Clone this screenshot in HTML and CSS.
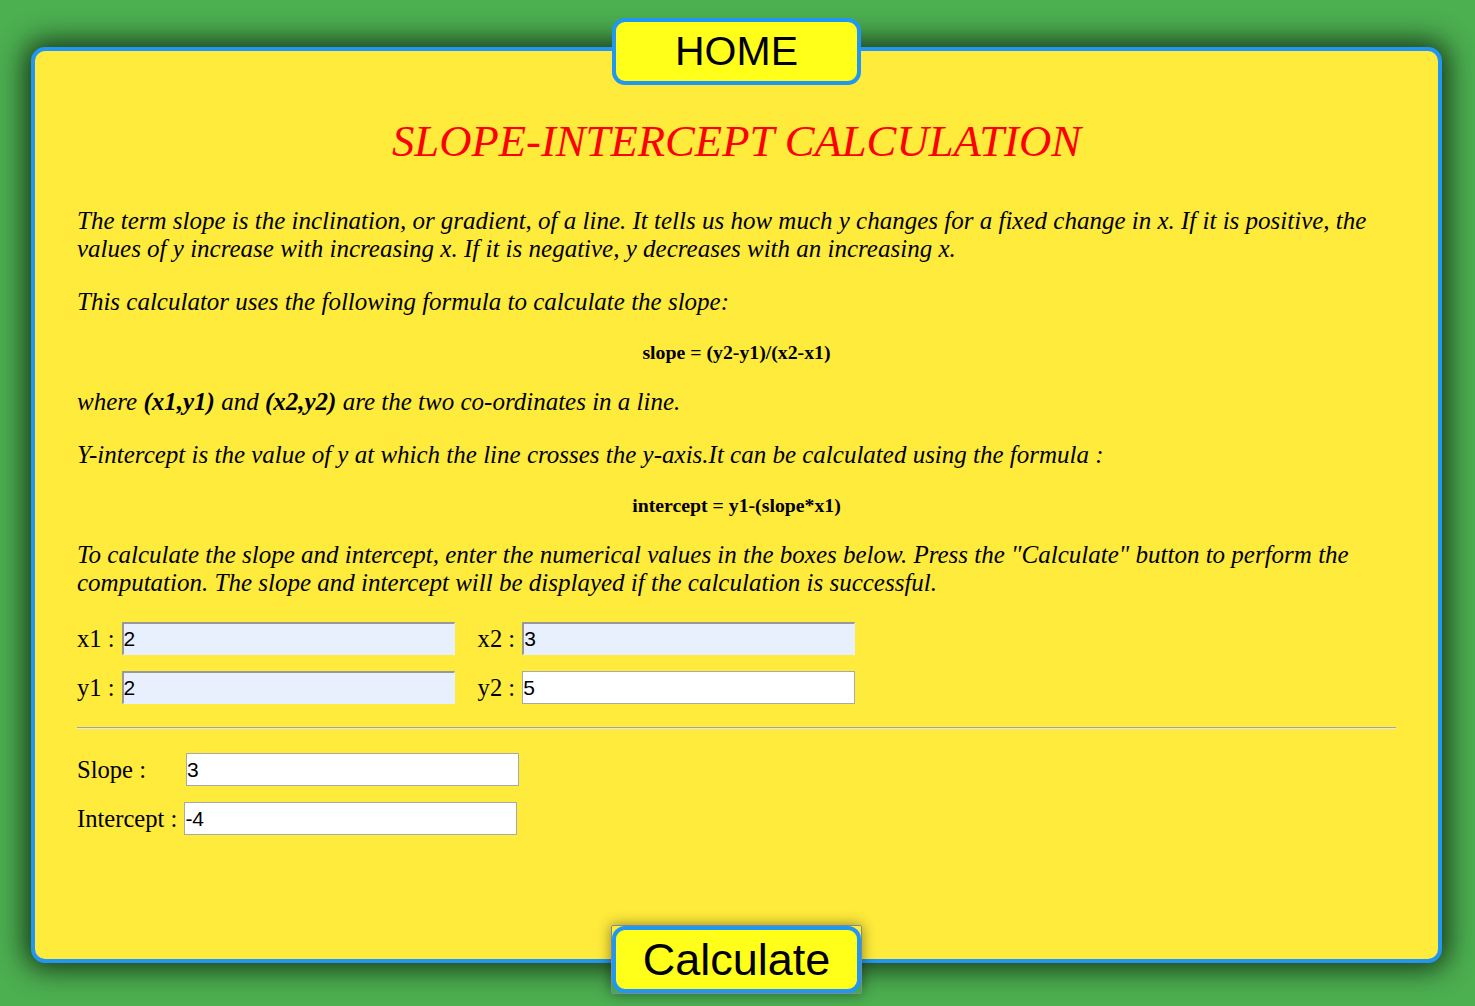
FILE: index.html
```html
<!DOCTYPE html>
<html>
<head>
<meta charset="utf-8">
<title>Slope-Intercept Calculation</title>
<link rel="stylesheet" href="styles.css">
</head>
<body>
<div class="card">
  <button class="btn btn-home">HOME</button>
  <h1 class="title">SLOPE-INTERCEPT CALCULATION</h1>
  <p class="text">The term slope is the inclination, or gradient, of a line. It tells us how much y changes for a fixed change in x. If it is positive, the values of y increase with increasing x. If it is negative, y decreases with an increasing x.</p>
  <p class="text">This calculator uses the following formula to calculate the slope:</p>
  <p class="formula">slope = (y2-y1)/(x2-x1)</p>
  <p class="text">where <b>(x1,y1)</b> and <b>(x2,y2)</b> are the two co-ordinates in a line.</p>
  <p class="text">Y-intercept is the value of y at which the line crosses the y-axis.It can be calculated using the formula :</p>
  <p class="formula">intercept = y1-(slope*x1)</p>
  <p class="text">To calculate the slope and intercept, enter the numerical values in the boxes below. Press the "Calculate" button to perform the computation. The slope and intercept will be displayed if the calculation is successful.</p>
  <div class="grid">
    <label class="lbl">x1 :</label><input class="field auto" value="2">
    <label class="lbl lbl2">x2 :</label><input class="field auto" value="3">
    <label class="lbl">y1 :</label><input class="field auto" value="2">
    <label class="lbl lbl2">y2 :</label><input class="field" value="5">
  </div>
  <hr class="rule">
  <div class="result">
    <label class="lbl slope-lbl">Slope :</label><input class="field" value="3">
  </div>
  <div class="result">
    <label class="lbl">Intercept :</label><input class="field" value="-4">
  </div>
  <div class="calc-wrap"><button class="btn btn-calc">Calculate</button></div>
</div>
</body>
</html>
```
FILE: styles.css
```css
html, body {
  margin: 0;
  padding: 0;
}
body {
  background: #4caf50;
  height: 1006px;
  overflow: hidden;
  padding-top: 47px;
  box-sizing: border-box;
}
.card {
  position: relative;
  margin-left: 31px;
  width: 1411px;
  height: 916px;
  box-sizing: border-box;
  background: #ffeb3b;
  border: 4px solid #2196f3;
  border-radius: 14px;
  box-shadow: 0 0 28px 6px rgba(0, 0, 0, 0.7);
  padding: 65px 42px 0 42px;
}
.btn {
  position: absolute;
  left: 577px;
  width: 249px;
  height: 67px;
  box-sizing: border-box;
  background: #ffff1a;
  border: 4px solid #2196f3;
  border-radius: 13px;
  font-family: "Liberation Sans", Arial, sans-serif;
  color: #000;
  padding: 0;
  cursor: pointer;
}
.btn-home {
  top: -33px;
  font-size: 41px;
}
.btn-calc {
  font-size: 45px;
  position: static;
  width: 100%;
  height: 100%;
}
.calc-wrap {
  position: absolute;
  left: 576px;
  top: 874px;
  width: 251px;
  height: 69px;
  box-sizing: border-box;
  border: 1px solid #7a8a9a;
  padding: 0;
  box-shadow: 0 0 14px rgba(0, 0, 0, 0.45);
  border-radius: 2px;
}
.title {
  margin: 0 0 41px 0;
  text-align: center;
  color: #ff0000;
  font-family: "Liberation Serif", "Times New Roman", serif;
  font-style: italic;
  font-weight: normal;
  font-size: 44.7px;
  line-height: 50px;
}
.text {
  margin: 0 0 25px 0;
  font-family: "Liberation Serif", "Times New Roman", serif;
  font-style: italic;
  font-size: 25px;
  line-height: 28px;
  color: #000;
}
.text b {
  font-weight: bold;
}
.formula {
  margin: 0 0 25px 0;
  text-align: center;
  font-family: "Liberation Serif", "Times New Roman", serif;
  font-weight: bold;
  font-size: 19.8px;
  line-height: 22px;
}
.grid {
  display: grid;
  grid-template-columns: auto 333px auto 333px;
  column-gap: 0;
  row-gap: 16px;
  align-items: center;
  justify-content: start;
  margin-top: 1px;
}
.lbl {
  font-family: "Liberation Serif", "Times New Roman", serif;
  font-size: 24.6px;
  line-height: 33px;
  padding-right: 7px;
  color: #000;
}
.lbl2 {
  padding-left: 23px;
}
.field {
  height: 33px;
  width: 333px;
  box-sizing: border-box;
  border: 1px solid #a9a9a9;
  background: #fff;
  font-family: "Liberation Sans", Arial, sans-serif;
  font-size: 21px;
  padding: 0;
  color: #000;
  margin: 0;
}
.field.auto {
  background: #e8f0fe;
  border-top: 2px solid #999;
  border-left: 2px solid #999;
  border-right: 1px solid #e8f0fe;
  border-bottom: 1px solid #e8f0fe;
}
.rule {
  margin: 23px 0 24px 0;
  border: 0;
  border-top: 1px solid #a0a0b0;
  border-bottom: 1px solid #e8e8e8;
  height: 0;
}
.result {
  display: flex;
  align-items: center;
  margin-bottom: 16px;
}
.slope-lbl {
  width: 109px;
  padding-right: 0;
}
```
